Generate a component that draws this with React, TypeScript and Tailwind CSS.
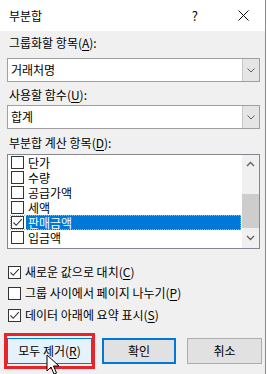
import React from "react";

const font = { fontFamily: '"Noto Sans CJK KR", "Noto Sans", sans-serif' };

function Mn({ c }: { c: string }) {
  return <span className="underline underline-offset-2">{c}</span>;
}

function CheckBox({ checked }: { checked?: boolean }) {
  return (
    <div className="w-[13px] h-[13px] border border-[#333] bg-white flex items-center justify-center shrink-0">
      {checked && (
        <svg width="11" height="11" viewBox="0 0 11 11">
          <path d="M1.5 5.5 L4.2 8.3 L9.8 2.2" fill="none" stroke="#333" strokeWidth="1.1" />
        </svg>
      )}
    </div>
  );
}

function Chevron({ up }: { up?: boolean }) {
  return (
    <svg width="9" height="6" viewBox="0 0 9 6">
      <path
        d={up ? "M1 5 L4.5 1.5 L8 5" : "M1 1 L4.5 4.5 L8 1"}
        fill="none"
        stroke="#606060"
        strokeWidth="1.3"
      />
    </svg>
  );
}

function Combo({ value }: { value: string }) {
  return (
    <div className="ml-[7px] w-[253px] h-[24px] border border-[#a0a0a0] bg-white flex">
      <div className="flex-1 pl-[3px] leading-[22px] text-[12px] text-black">{value}</div>
      <div className="w-[17px] h-full bg-[#e5e5e5] border-l border-[#c8c8c8] flex items-center justify-center">
        <svg width="8" height="5" viewBox="0 0 8 5">
          <path d="M0.5 0.5 L4 4 L7.5 0.5" fill="none" stroke="#606060" strokeWidth="1" />
        </svg>
      </div>
    </div>
  );
}

const items = ["단가", "수량", "공급가액", "세액", "판매금액", "입금액"];

export default function App() {
  return (
    <div className="relative w-[267px] h-[374px] overflow-hidden bg-white" style={font}>
      <div className="w-[266px] h-[374px] border-r border-[#8a8a8a] bg-[#f0f0f0] flex flex-col text-[12px] text-black">
        {/* title bar */}
        <div className="h-[31px] bg-white flex items-center shrink-0">
          <span className="ml-[9px] text-[12px]">부분합</span>
          <span className="ml-auto mr-[40px] text-[13px]">?</span>
          <svg width="11" height="11" viewBox="0 0 11 11" className="mr-[16px]">
            <path d="M0.5 0.5 L10.5 10.5 M10.5 0.5 L0.5 10.5" stroke="#111" strokeWidth="1" />
          </svg>
        </div>

        <div className="mt-[4px] ml-[9px] h-[16px] leading-[16px]">
          그룹화할 항목(<Mn c="A" />):
        </div>
        <div className="mt-[7px]">
          <Combo value="거래처명" />
        </div>

        <div className="mt-[5px] ml-[9px] h-[16px] leading-[16px]">
          사용할 함수(<Mn c="U" />):
        </div>
        <div className="mt-[2px]">
          <Combo value="합계" />
        </div>

        <div className="mt-[6px] ml-[9px] h-[16px] leading-[16px]">
          부분합 계산 항목(<Mn c="D" />):
        </div>

        {/* list box */}
        <div className="mt-[3px] ml-[7px] w-[253px] h-[95px] border border-[#828790] bg-white flex overflow-hidden">
          <div className="flex-1 pl-[2px] pr-[1px]">
            {items.map((it, i) => {
              const sel = i === 4;
              return (
                <div
                  key={it}
                  className={
                    "h-[15px] flex items-center " +
                    (sel ? "outline outline-1 outline-dotted outline-offset-[-1px] outline-[#f5a623]" : "")
                  }
                >
                  <div className="ml-[1px]">
                    <CheckBox checked={sel} />
                  </div>
                  <div
                    className={
                      "ml-[2px] flex-1 h-[15px] pl-[2px] leading-[15px] " +
                      (sel ? "bg-[#0078d7] text-white" : "")
                    }
                  >
                    {it}
                  </div>
                </div>
              );
            })}
          </div>
          <div className="w-[17px] h-full bg-[#f0f0f0] flex flex-col items-center">
            <div className="h-[17px] flex items-center justify-center">
              <Chevron up />
            </div>
            <div className="mt-[22px] w-[17px] h-[34px] bg-[#cdcdcd]" />
            <div className="flex-1 flex items-center justify-center">
              <Chevron />
            </div>
          </div>
        </div>

        {/* options */}
        <div className="mt-[15px] ml-[8px] h-[16px] flex items-center gap-[4px]">
          <CheckBox checked />
          <span>
            새로운 값으로 대치(<Mn c="C" />)
          </span>
        </div>
        <div className="mt-[5px] ml-[8px] h-[16px] flex items-center gap-[4px]">
          <CheckBox />
          <span>
            그룹 사이에서 페이지 나누기(<Mn c="P" />)
          </span>
        </div>
        <div className="mt-[6px] ml-[8px] h-[16px] flex items-center gap-[4px]">
          <CheckBox checked />
          <span>
            데이터 아래에 요약 표시(<Mn c="S" />)
          </span>
        </div>

        {/* buttons */}
        <div className="mt-[15px] ml-[7px] flex gap-[10px]">
          <button className="w-[85px] h-[26px] bg-[#e5f1fb] border border-[#0078d7] text-[12px]">
            모두 제거(<Mn c="R" />)
          </button>
          <button className="w-[74px] h-[26px] bg-[#e1e1e1] border-2 border-[#0078d7] text-[12px]">
            확인
          </button>
          <button className="ml-[1px] w-[75px] h-[26px] bg-[#e1e1e1] border border-[#adadad] text-[12px]">
            취소
          </button>
        </div>
      </div>

      {/* red annotation box */}
      <div className="absolute left-[4px] top-[333px] w-[91px] h-[36px] border-[3px] border-[#e8242b]" />

      {/* mouse cursor */}
      <svg className="absolute left-[46px] top-[354px]" width="14" height="22" viewBox="0 0 14 22">
        <path d="M1 1 L1 17 L5 13 L8 20 L10.5 19 L7.5 12 L13 12 Z" fill="white" stroke="black" strokeWidth="1" />
      </svg>
    </div>
  );
}
